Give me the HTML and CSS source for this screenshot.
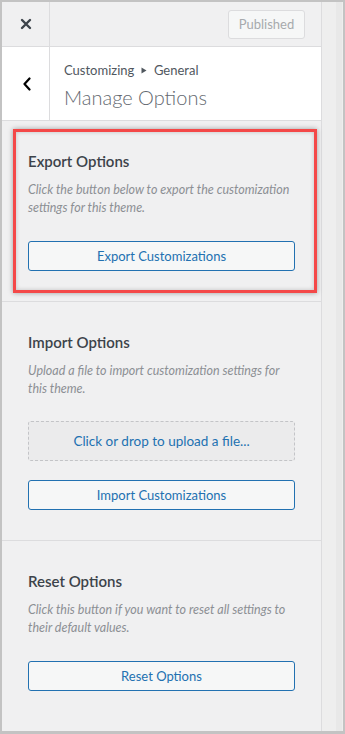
FILE: index.html
```html
<!DOCTYPE html>
<html lang="en">
<head>
    <meta charset="UTF-8">
    <meta name="viewport" content="width=device-width, initial-scale=1.0">
    <title>Manage Options</title>
    <link rel="stylesheet" href="styles.css">
</head>
<body>

<div class="frame">
    <aside class="panel">
        <header class="topbar">
            <button class="close" aria-label="Close">
                <svg width="12" height="12" viewBox="0 0 12 12"><path d="M2 2 L10 10 M10 2 L2 10" stroke="#3c434a" stroke-width="2.4" stroke-linecap="round"/></svg>
            </button>
            <span class="published">Published</span>
        </header>

        <div class="section-title">
            <button class="back" aria-label="Back">
                <svg width="10" height="14" viewBox="0 0 10 14"><path d="M7.5 1.5 L2.5 7 L7.5 12.5" fill="none" stroke="#000" stroke-width="2.2" stroke-linecap="round" stroke-linejoin="round"/></svg>
            </button>
            <div class="titles">
                <span class="crumbs">Customizing <svg class="arrow" width="6" height="7" viewBox="0 0 6 7"><path d="M0.5 0.5 L5.5 3.5 L0.5 6.5 Z" fill="#50575e"/></svg> General</span>
                <h2>Manage Options</h2>
            </div>
        </div>

        <div class="options">
            <section class="group marked">
                <span class="highlight"></span>
                <h3>Export Options</h3>
                <p class="desc">Click the button below to export the customization settings for this theme.</p>
                <button class="btn">Export Customizations</button>
            </section>

            <section class="group">
                <h3>Import Options</h3>
                <p class="desc">Upload a file to import customization settings for this theme.</p>
                <div class="dropzone">Click or drop to upload a file...</div>
                <button class="btn btn-gap">Import Customizations</button>
            </section>

            <section class="group last">
                <h3>Reset Options</h3>
                <p class="desc">Click this button if you want to reset all settings to their default values.</p>
                <button class="btn">Reset Options</button>
            </section>
        </div>
    </aside>
    <div class="strip"><span class="track"></span></div>
</div>

</body>
</html>
```

FILE: styles.css
```css
body {
    margin: 0;
    font-family: 'Lato', 'Liberation Sans', sans-serif;
    background-color: #c3c3c3;
}

.frame {
    width: 345px;
    height: 734px;
    box-sizing: border-box;
    border: 2px solid #c3c3c3;
    border-bottom-width: 3px;
    display: flex;
    background-color: #f0f0f1;
}

.panel {
    width: 320px;
    box-sizing: border-box;
    border-right: 1px solid #dcdcde;
    display: flex;
    flex-direction: column;
    background-color: #f0f0f1;
}

.strip {
    flex: 1;
    display: flex;
    justify-content: flex-end;
    background-color: #eeeeee;
}

.track {
    width: 6px;
    margin-right: 1px;
    background-color: #e8e8e8;
}

/* top bar */
.topbar {
    height: 45px;
    box-sizing: border-box;
    border-bottom: 1px solid #dcdcde;
    display: flex;
    align-items: center;
    justify-content: space-between;
}

.close,
.back {
    width: 48px;
    height: 100%;
    border: 0;
    border-right: 1px solid #dcdcde;
    background: none;
    padding: 0;
    display: flex;
    align-items: center;
    justify-content: center;
}

.published {
    margin-right: 16px;
    width: 77px;
    height: 29px;
    box-sizing: border-box;
    border: 1px solid #dcdcde;
    border-radius: 3px;
    background-color: #f6f7f7;
    color: #a7aaad;
    font-size: 13px;
    display: flex;
    align-items: center;
    justify-content: center;
}

/* section heading */
.section-title {
    height: 74px;
    box-sizing: border-box;
    border-bottom: 1px solid #dcdcde;
    background-color: #fff;
    display: flex;
}

.back {
    padding-left: 2px;
}

.titles {
    padding: 14px 0 0 14px;
}

.crumbs {
    display: block;
    font-size: 13px;
    line-height: 18px;
    color: #50575e;
}

.arrow {
    margin: 0 4px 1px 3px;
}

.titles h2 {
    margin: 4px 0 0;
    font-size: 20px;
    font-weight: 300;
    line-height: 28px;
    color: #646970;
}

/* option groups */
.group {
    position: relative;
    padding: 30px 26px 30px;
    border-bottom: 1px solid #dcdcde;
}

.group.last {
    border-bottom: 0;
}

.group h3 {
    margin: 0 0 10px;
    font-size: 15px;
    font-weight: 600;
    line-height: 20px;
    color: #3c434a;
}

.desc {
    margin: 0 0 24px;
    font-size: 12.5px;
    font-style: italic;
    line-height: 18px;
    color: #8c8f94;
}

.btn {
    display: block;
    width: 100%;
    height: 30px;
    border: 1px solid #2271b1;
    border-radius: 3px;
    background-color: #f6f7f7;
    color: #2271b1;
    font-family: inherit;
    font-size: 13px;
    padding: 0;
}

.btn-gap {
    margin-top: 19px;
}

.dropzone {
    height: 40px;
    margin-top: -1px;
    box-sizing: border-box;
    border: 1px dashed #c3c4c7;
    border-radius: 3px;
    background-color: #ebebec;
    color: #2271b1;
    font-size: 13.5px;
    display: flex;
    align-items: center;
    justify-content: center;
}

/* red annotation around the export group */
.highlight {
    position: absolute;
    left: 11px;
    top: 8px;
    right: 4px;
    bottom: 8px;
    border: 3px solid #f44848;
    box-shadow: 0 0 5px rgba(0, 0, 0, 0.35), inset 0 0 4px rgba(0, 0, 0, 0.2);
    pointer-events: none;
}
```
